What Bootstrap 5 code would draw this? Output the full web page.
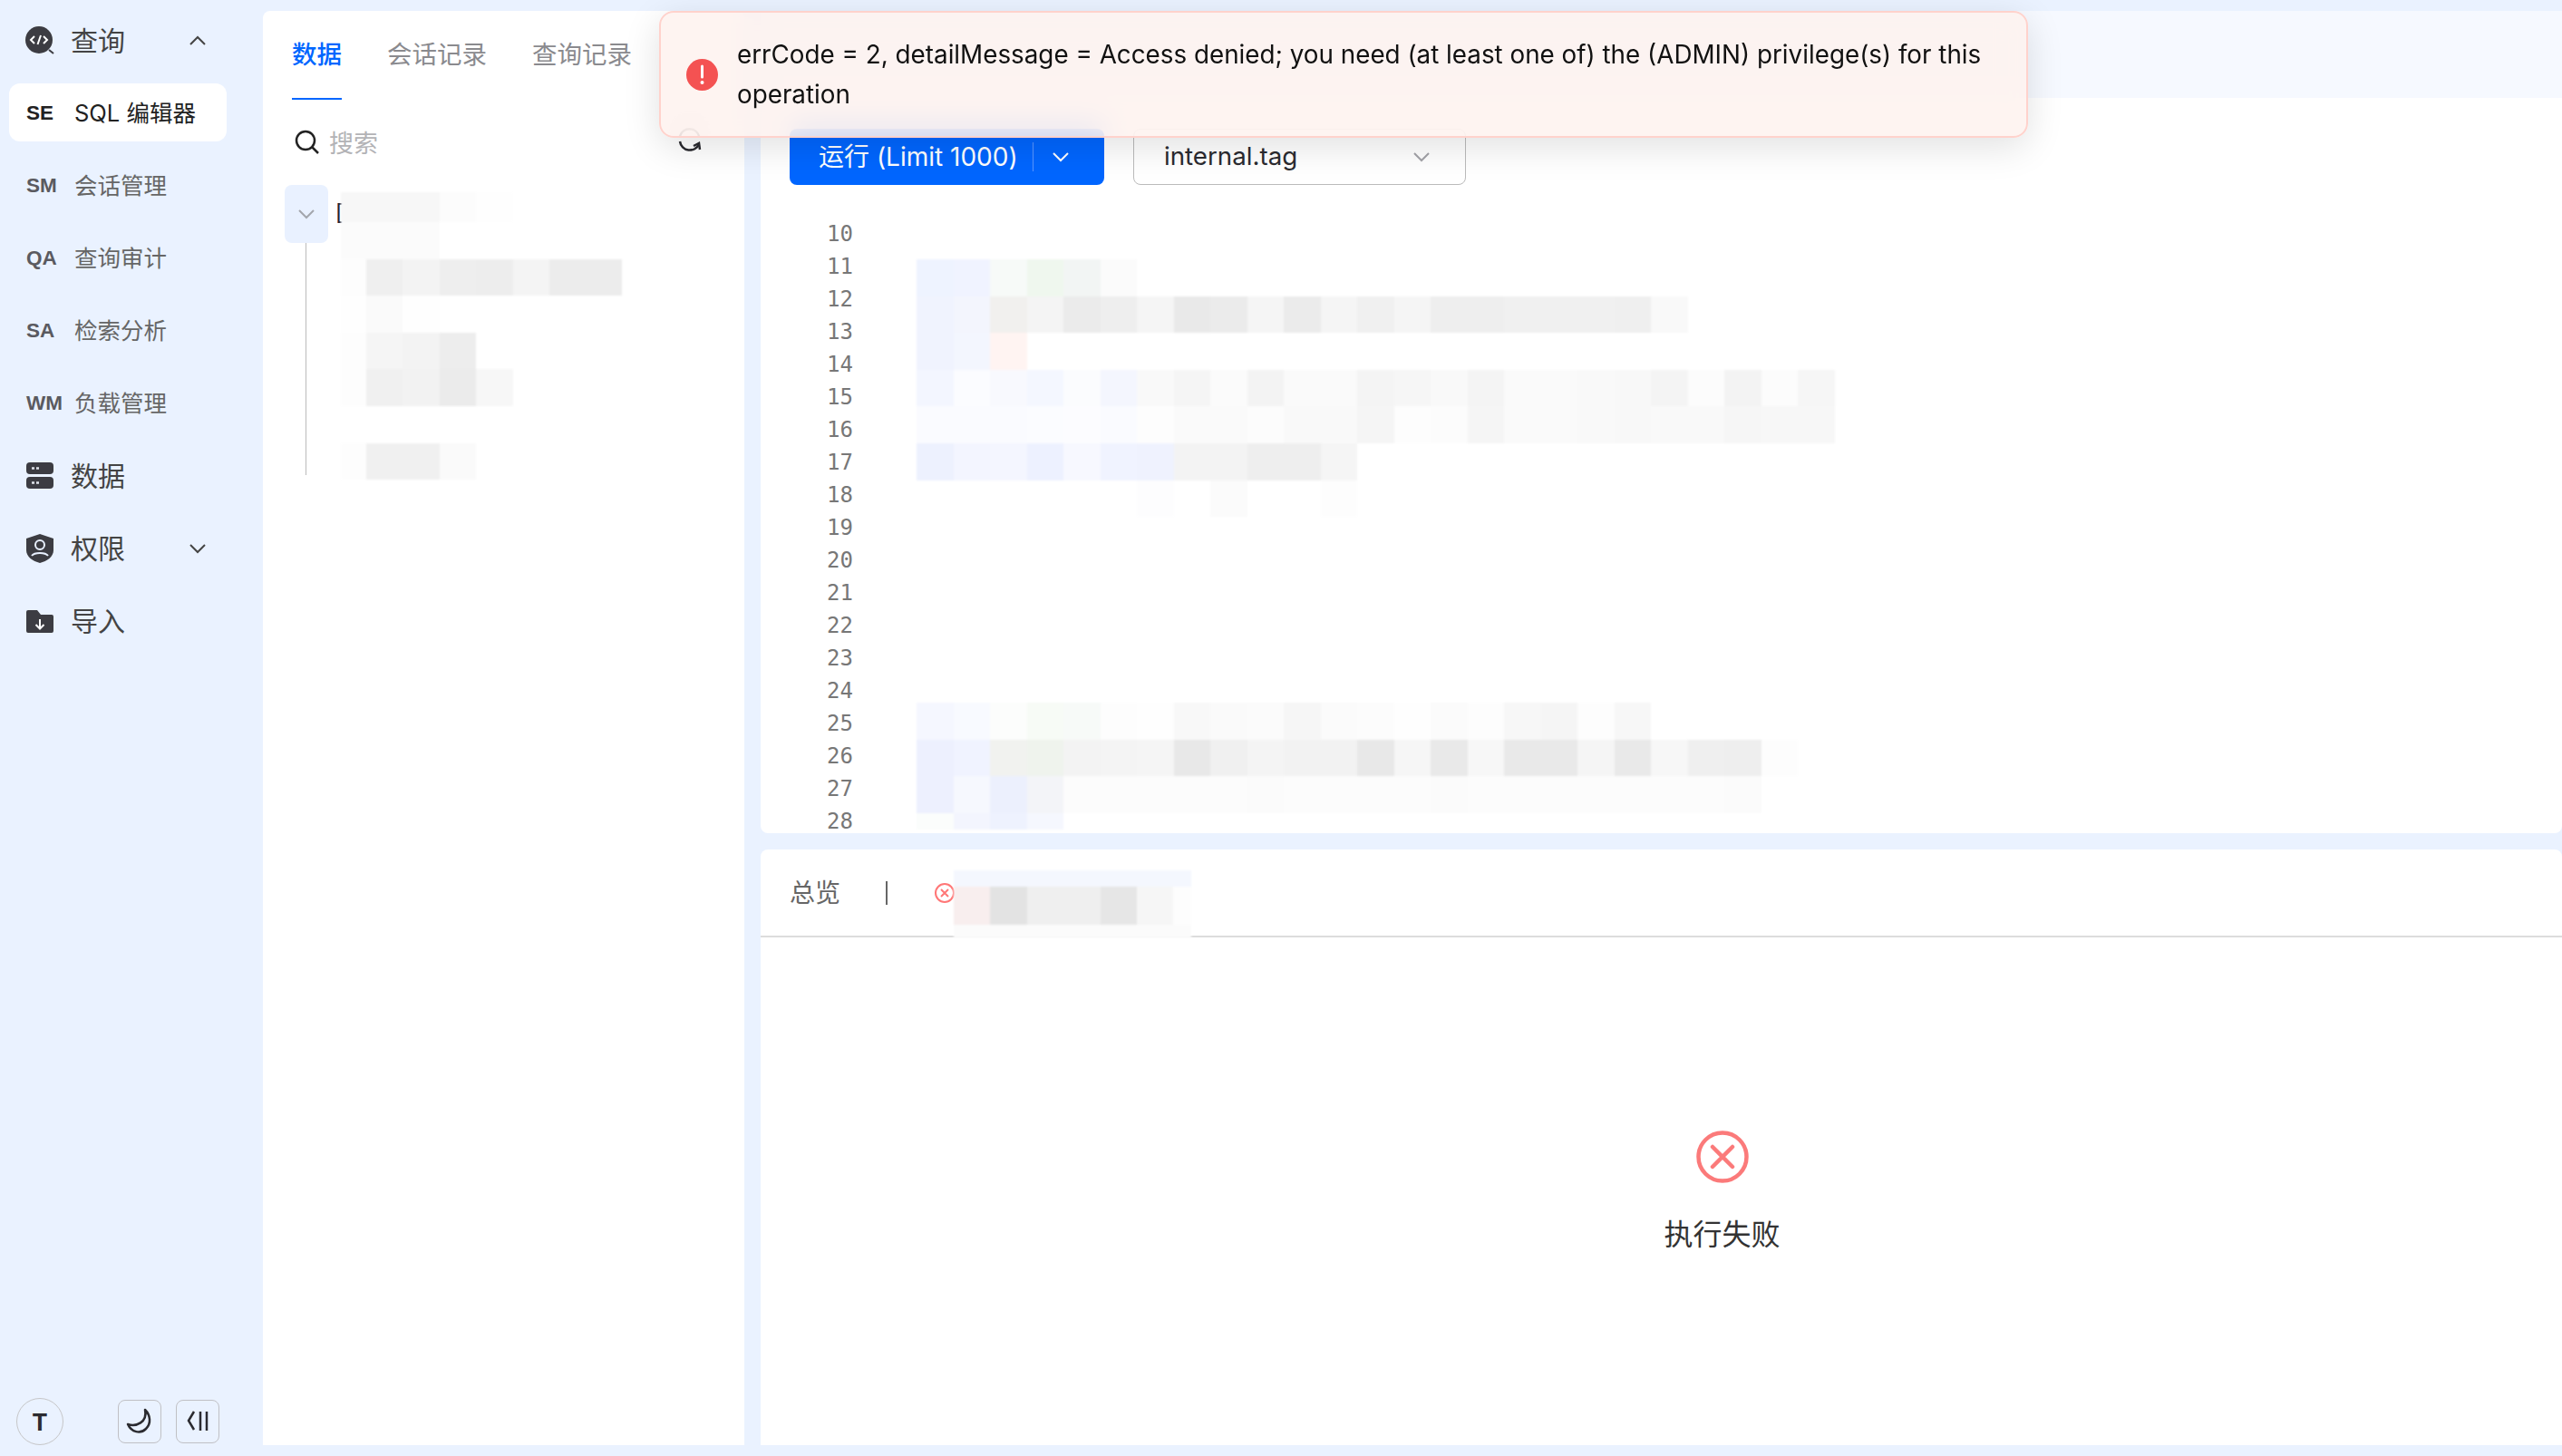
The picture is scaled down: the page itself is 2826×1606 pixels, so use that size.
<!doctype html>
<html lang="zh">
<head>
<meta charset="utf-8">
<title>SQL 编辑器</title>
<link href="https://cdn.jsdelivr.net/npm/bootstrap@5.3.0/dist/css/bootstrap.min.css" rel="stylesheet">
<style>
body{background:#eaf2ff;font-family:Inter,"Noto Sans CJK SC",sans-serif;color:#2b2b30;height:1606px;overflow:hidden}
.shell{height:1606px;position:relative}
.side{width:290px;flex:none;padding:12px 0 12px}
.side-row{height:64px;margin:0 40px 16px 10px;padding:1px 0 0 18px;font-size:30px;color:#444;line-height:1}
.side-row svg.ico{width:32px;height:32px;flex:none;margin-right:18px}
.side-row .chev{margin-left:auto;margin-right:22px;width:20px;height:12px}
.sub-row{height:64px;margin:0 40px 16px 10px;padding:1px 0 0 19px;font-size:25.5px;color:#666;border-radius:12px;line-height:1}
.sub-row b{width:53px;flex:none;font:700 22.500px "Liberation Sans",sans-serif;color:#5a5a60}
.sub-row.on{background:#fff;color:#222}
.sub-row.on b{color:#222}
.foot{padding:0 0 0 18px}
.avatar{width:52px;height:52px;border:1.5px solid #c6c6c8;border-radius:50%;font:700 26px Inter,sans-serif;color:#2b2b30;margin-right:60px}
.sq{width:48px;height:48px;border:1.5px solid #c0c0c4;border-radius:8px;margin-right:16px}
.main{padding:12px 0 12px;min-width:0}
.tree{width:531px;flex:none;background:#fff;border-radius:8px 8px 0 0;position:relative}
.right{gap:18px;margin-left:18px;min-width:0}
.tabs-l{height:98px;padding:0 0 0 32px;gap:50px;font-size:27.5px;color:#8a8a8e}
.tabs-l span{line-height:96px;height:98px}
.tabs-l .act{color:#06f;border-bottom:2px solid #06f;font-weight:500}
.srch{padding:33px 0 0 35px;font-size:27px;color:#b3b3b6;height:92px;line-height:1}
.srch svg{margin-right:10px}
.srch span{margin-top:2px}
.refresh{position:absolute;left:456px;top:128px}
.folder{position:absolute;left:24px;top:192px;width:48px;height:64px;background:#e9f1ff;border-radius:8px}
.stem{position:absolute;left:47px;top:256px;width:1px;height:256px;background:#bbb}
.brk{position:absolute;left:77px;top:209px;font:24px "DejaVu Sans Mono",monospace;color:#223}
.edit{height:907px;flex:none;background:#fff;border-radius:0 0 8px 8px;position:relative}
.topbar{height:96px;background:#f6f9ff}
.tools{padding:34px 0 36px 32px;gap:32px}
.run{width:347px;height:62px;background:#06f;border:0;border-radius:8px;color:#fff;font-size:28px;padding:0 0 0 32px}
.run i{display:block;width:1px;height:32px;background:#5a97ff;margin:0 20px 0 16px}
.pick{width:367px;height:62px;background:#fff;border:1.5px solid #bbb;border-radius:8px;font-size:27.7px;color:#2b2b30;padding:0 38px 0 33px}
.code{position:relative}
.nums{width:102px;text-align:right;font:24px/36px "DejaVu Sans Mono",monospace;color:#777}
.mos{position:absolute;display:grid;filter:blur(.8px)}
.ed1{left:172px;top:46px;grid-template-columns:repeat(25,40.5px);grid-auto-rows:40.6px}
.ed2{left:172px;top:535px;grid-template-columns:repeat(24,40.5px);grid-template-rows:repeat(3,40.5px) 18px}
.tr1{left:86px;top:200px;grid-template-columns:28px repeat(4,40.4px) 40.4px 80px;grid-template-rows:33px repeat(7,40.6px)}
.res1{left:213px;top:23px;grid-template-columns:repeat(6,40.4px) 20px;grid-template-rows:18px 42px 15px}
.res{background:#fff;border-radius:8px 8px 0 0;position:relative}
.res-tabs{height:97px;border-bottom:2px solid #ddd;padding:0 0 0 32px;font-size:28px;color:#666;line-height:1}
.res-tabs i{display:block;width:2px;height:26px;background:#666;margin:0 51px 0 50px}
.fail{font-size:32px;color:#333;padding:213px 0 0 134px}
.fail svg{margin-bottom:33px}
.toast-err{position:absolute;left:727px;top:12px;width:1510px;height:140px;background:rgba(254,241,237,.8);backdrop-filter:blur(16px);border:2px solid #ffd2cc;border-radius:16px;box-shadow:0 10px 40px rgba(0,0,0,.12);padding:0 30px 0 28px;font-size:27.8px;line-height:44px;color:#111}
.toast-err svg{flex:none;margin-right:21px}
</style>
</head>
<body>
<div class="shell d-flex">
  <aside class="side d-flex flex-column justify-content-between">
    <nav class="d-flex flex-column">
      <div class="side-row d-flex align-items-center">
        <svg class="ico" viewBox="0 0 32 32"><circle cx="15" cy="15" r="15" fill="#3c3c42"/><path d="M26 26l5 4" stroke="#3c3c42" stroke-width="2"/><path d="M10 11l-4 4 4 4M20 11l4 4-4 4M17 10l-3.500 10" fill="none" stroke="#fff" stroke-width="2"/></svg>
        <span>查询</span>
        <svg class="chev" viewBox="0 0 20 12"><path d="M2 10l8-8 8 8" fill="none" stroke="#444" stroke-width="2"/></svg>
      </div>
      <div class="sub-row on d-flex align-items-center"><b>SE</b><span>SQL 编辑器</span></div>
      <div class="sub-row d-flex align-items-center"><b>SM</b><span>会话管理</span></div>
      <div class="sub-row d-flex align-items-center"><b>QA</b><span>查询审计</span></div>
      <div class="sub-row d-flex align-items-center"><b>SA</b><span>检索分析</span></div>
      <div class="sub-row d-flex align-items-center"><b>WM</b><span>负载管理</span></div>
      <div class="side-row d-flex align-items-center">
        <svg class="ico" viewBox="0 0 32 32"><rect x="1" y="1" width="30" height="13" rx="4" fill="#3c3c42"/><rect x="1" y="17" width="30" height="13" rx="4" fill="#3c3c42"/><path d="M7 7.500h3M12 7.500h3M7 23.500h3M12 23.500h3" stroke="#dfe3ea" stroke-width="2.500"/></svg>
        <span>数据</span>
      </div>
      <div class="side-row d-flex align-items-center">
        <svg class="ico" viewBox="0 0 32 32"><path d="M16 0l15 5v13c0 7-7 12-15 14C8 30 1 25 1 18V5z" fill="#3c3c42"/><circle cx="16" cy="12" r="5" fill="none" stroke="#e9f1ff" stroke-width="2"/><path d="M7 24c3-4 15-4 18 0" fill="none" stroke="#e9f1ff" stroke-width="2"/></svg>
        <span>权限</span>
        <svg class="chev" viewBox="0 0 20 12"><path d="M2 2l8 8 8-8" fill="none" stroke="#444" stroke-width="2"/></svg>
      </div>
      <div class="side-row d-flex align-items-center">
        <svg class="ico" viewBox="0 0 32 32"><path d="M1 6a2 2 0 0 1 2-2h10l4 5h12a2 2 0 0 1 2 2v16a2 2 0 0 1-2 2H3a2 2 0 0 1-2-2z" fill="#3c3c42"/><path d="M16 14v10M11.500 20l4.500 4.500 4.500-4.500" fill="none" stroke="#fff" stroke-width="2"/></svg>
        <span>导入</span>
      </div>
    </nav>
    <div class="foot d-flex align-items-center">
      <div class="avatar d-flex align-items-center justify-content-center">T</div>
      <div class="sq d-flex align-items-center justify-content-center">
        <svg width="46" height="46" viewBox="0 0 46 46"><path d="M29 10C35 16 36 25 30 31 24 37 14 35 10 26 19 29 32 24 29 10Z" fill="none" stroke="#2b2b30" stroke-width="2.500" stroke-linejoin="round"/></svg>
      </div>
      <div class="sq d-flex align-items-center justify-content-center">
        <svg width="46" height="46" viewBox="0 0 46 46"><path d="M19 13l-6 10 6 10" transform="translate(0 -1)" fill="none" stroke="#2b2b30" stroke-width="2.500"/><path d="M26 12v21M33 12v21" stroke="#2b2b30" stroke-width="2.500"/></svg>
      </div>
    </div>
  </aside>

  <main class="main flex-grow-1 d-flex">
    <section class="tree">
      <div class="tabs-l d-flex"><span class="act">数据</span><span>会话记录</span><span>查询记录</span></div>
      <div class="srch d-flex align-items-start">
        <svg width="28" height="28" viewBox="0 0 28 28"><circle cx="12" cy="12" r="10" fill="none" stroke="#222" stroke-width="2.500"/><path d="M19 19l7 7" stroke="#222" stroke-width="2.500"/></svg>
        <span>搜索</span>
      </div>
      <svg class="refresh" width="30" height="30" viewBox="0 0 30 30"><path d="M25 19a11 11 0 0 1-21-3M4 10a11 11 0 0 1 21 0" fill="none" stroke="#2b2b30" stroke-width="2.500"/><path d="M19 21l6-3 1 7" fill="none" stroke="#2b2b30" stroke-width="2.500"/></svg>
      <div class="folder d-flex align-items-center justify-content-center">
        <svg width="18" height="12" viewBox="0 0 18 12"><path d="M1 2l8 8 8-8" fill="none" stroke="#a3a6ad" stroke-width="2"/></svg>
      </div>
      <div class="stem"></div>
      <div class="brk">[</div>
      <div class="mos tr1" data-rows="f7f7f7,f7f7f7,f7f7f7,fcfcfc,fefefe,,|fbfbfb,fbfbfb,fbfbfb,,,,|fdfdfd,efefef,f3f3f3,eeeeee,ededed,f4f4f4,ececec|fefefe,fafafa,fefefe,,,,|fdfdfd,f5f5f5,f3f3f3,ededed,,,|fdfdfd,f0f0f0,f2f2f2,ebebeb,f7f7f7,,|,,,,,,|fdfdfd,f0f0f0,f0f0f0,fafafa,,,"></div>
    </section>

    <div class="right flex-grow-1 d-flex flex-column">
      <section class="edit">
        <div class="topbar"></div>
        <div class="tools d-flex">
          <button class="run d-flex align-items-center" type="button">
            <span>运行 (Limit 1000)</span><i></i>
            <svg width="20" height="12" viewBox="0 0 20 12"><path d="M2 2l8 8 8-8" fill="none" stroke="#fff" stroke-width="2"/></svg>
          </button>
          <div class="pick d-flex align-items-center justify-content-between">
            <span>internal.tag</span>
            <svg width="20" height="12" viewBox="0 0 20 12"><path d="M2 2l8 8 8-8" fill="none" stroke="#a3a3a8" stroke-width="2"/></svg>
          </div>
        </div>
        <div class="code">
          <div class="nums">10<br>11<br>12<br>13<br>14<br>15<br>16<br>17<br>18<br>19<br>20<br>21<br>22<br>23<br>24<br>25<br>26<br>27<br>28</div>
          <div class="mos ed1" data-rows="eef3ff,f0f3ff,f7faf8,eff7ee,f2f5f4,fbfbfb|f0f3fe,f3f5fd,f1f0ee,f4f4f4,ebebeb,eeeeee,f5f5f5,e9e9e9,ebebeb,f5f5f5,ebebeb,f5f5f5,f0f0f0,f5f5f5,eeeeee,eeeeee,f0f0f0,f0f0f0,f0f0f0,efefef,f9f9f9|f0f3fe,f3f6fe,fff4f2|f3f6ff,fbfcff,f8f9fe,f4f7ff,fbfcfe,f4f6fe,f9f9f9,f5f5f5,fbfbfb,f3f3f3,fafafa,fafafa,f4f4f4,f6f6f6,f9f9f9,f4f4f4,fafafa,fafafa,f9f9f9,f8f8f8,f4f4f4,fcfcfc,f3f3f3,fcfcfc,f6f6f6|fafbff,fafbff,fafbff,fbfcff,fcfcff,fafbff,fdfdfd,fafafa,fafafa,fcfcfc,f9f9f9,f9f9f9,f5f5f5,fdfdfd,fcfcfc,f5f5f5,fafafa,fafafa,f9f9f9,f8f8f8,f9f9f9,f9f9f9,f6f6f6,f7f7f7,f7f7f7|edf1fe,f3f5ff,f4f6ff,edf1ff,f7f8ff,f0f3ff,eff2fe,f3f3f3,f3f3f3,eeeeee,eeeeee,f5f5f5|,,,,,,fdfdfe,,fbfbfb,,,fdfdfd"></div>
          <div class="mos ed2" data-rows="f5f7ff,f8faff,fcfdfc,f7fbf6,f7faf8,fdfdfd,fefefe,f8f8f8,fafafa,fbfbfb,f6f6f6,fbfbfb,fcfcfc,fefefe,fbfbfb,fdfdfd,f7f7f7,f5f5f5,fdfdfd,f7f7f7|edf0fe,f0f3ff,f1f2ef,eff3ed,f3f3f3,f4f4f4,f5f5f5,e8e8e8,f0f0f0,f4f4f4,f2f2f2,f2f2f2,e8e8e8,f6f6f6,e9e9e9,f7f7f7,e9e9e9,e9e9e9,f5f5f5,e9e9e9,f7f7f7,efefef,eeeeee,fdfdfd|edf0fe,f6f8fe,ecf0fd,f3f4f8,fcfcfc,fcfcfc,fcfcfc,fcfcfc,fcfcfc,fbfbfb,fcfcfc,fcfcfc,fcfcfc,fcfcfc,fbfbfb,fcfcfc,fcfcfc,fcfcfc,fcfcfc,fcfcfc,fcfcfc,fcfcfc,fbfbfb|fbfdfc,f3f5fe,eef2fe,f5f7fe"></div>
        </div>
      </section>

      <section class="res flex-grow-1">
        <div class="res-tabs d-flex align-items-center">
          <span>总览</span><i></i>
          <svg width="24" height="24" viewBox="0 0 24 24"><circle cx="12" cy="12" r="10" fill="none" stroke="#f77" stroke-width="2"/><path d="M8 8l8 8M16 8l-8 8" stroke="#f77" stroke-width="2"/></svg>
        </div>
        <div class="mos res1" data-rows="f4f7fe,f4f7fe,f4f7fe,f4f7fe,f4f7fe,f4f7fe,f4f7fe|f8eeee,e3e3e3,efefef,efefef,e6e6e6,f6f6f6,fdfdfd|fbfbfb,fbfbfb,fbfbfb,fbfbfb,fbfbfb,fbfbfb,fbfbfb"></div>
        <div class="fail d-flex flex-column align-items-center">
          <svg width="58" height="58" viewBox="0 0 58 58"><circle cx="29" cy="29" r="26.500" fill="none" stroke="#fb7a7a" stroke-width="4.500"/><path d="M18 18l22 22M40 18L18 40" stroke="#fb7a7a" stroke-width="4.500" stroke-linecap="round"/></svg>
          <span>执行失败</span>
        </div>
      </section>
    </div>
  </main>

  <div class="toast-err d-flex align-items-center" role="alert">
    <svg width="35" height="35" viewBox="0 0 35 35"><circle cx="17.500" cy="17.500" r="17.500" fill="#f45252"/><path d="M17.500 8v12" stroke="#fff" stroke-width="3" stroke-linecap="round"/><circle cx="17.500" cy="26" r="2" fill="#fff"/></svg>
    <div>errCode = 2, detailMessage = Access denied; you need (at least one of) the (ADMIN) privilege(s) for this operation</div>
  </div>
</div>
<script>
document.querySelectorAll('.mos').forEach(function(m){
  m.dataset.rows.split('|').forEach(function(r){
    var cells=r.split(','), n=getComputedStyle(m).gridTemplateColumns.split(' ').length;
    for(var i=0;i<n;i++){
      var c=document.createElement('div');
      if(cells[i]) c.style.background='#'+cells[i];
      m.appendChild(c);
    }
  });
});
</script>
<script src="https://cdn.jsdelivr.net/npm/bootstrap@5.3.0/dist/js/bootstrap.bundle.min.js"></script>
</body>
</html>
